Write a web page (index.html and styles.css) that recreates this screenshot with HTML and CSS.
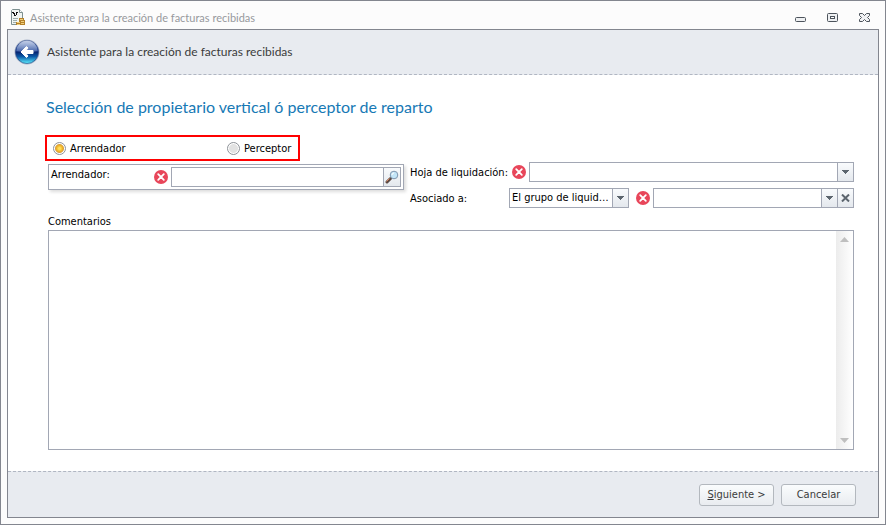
FILE: index.html
```html
<!DOCTYPE html>
<html lang="es">
<head>
  <meta charset="utf-8">
  <title>Asistente para la creación de facturas recibidas</title>
  <link rel="stylesheet" href="styles.css">
</head>
<body>
  <!-- shared icons -->
  <svg class="sprite" width="0" height="0">
    <symbol id="error" viewBox="0 0 14 14">
      <circle cx="7" cy="7" r="7" fill="#e8465a"/>
      <path d="M4.2 4.2l5.6 5.6M9.8 4.2L4.2 9.8" stroke="#fff" stroke-width="1.8" stroke-linecap="round"/>
    </symbol>
    <symbol id="arrow" viewBox="0 0 7 4">
      <path d="M0 0h7v1H6v1H5v1H4v1H3V3H2V2H1V1H0z" fill="#5c656e"/>
    </symbol>
  </svg>

  <div class="window">
    <div class="titlebar">
      <svg class="app-icon" width="16" height="17" viewBox="0 0 16 17">
        <path d="M1.500 1.500l1-1h7l3 3v12h-11z" fill="#f1f5f2" stroke="#7d9090"/>
        <path d="M9.500.5v3h3" fill="#fff" stroke="#7d9090"/>
        <path d="M2 3h2v1h1v2H4V5H3V4H2zM6 3h2v1H7v2H6zM4 6h2v1H4z" fill="#111"/>
        <path d="M3 9.500h5M3 11.500h4M3 13.500h3" stroke="#9fb0ae"/>
        <path d="M9 9h5v2h1v5H6v-3h3z" fill="#b5822c"/>
        <path d="M10 10.500h3M7 13.500h3M11 12.500h3M7 15.500h3M11 14.500h3" stroke="#f0cf7c"/>
      </svg>
      <span class="titlebar-text">Asistente para la creación de facturas recibidas</span>
      <div class="window-buttons">
        <button type="button" aria-label="Minimizar">
          <svg width="12" height="12" viewBox="0 0 12 12"><rect x=".5" y="5.500" width="10" height="4" rx="1" fill="#eef0f2" stroke="#4d545c"/></svg>
        </button>
        <button type="button" aria-label="Maximizar">
          <svg width="12" height="12" viewBox="0 0 12 12"><rect x=".5" y="1.500" width="10" height="8" rx="1" fill="#eef0f2" stroke="#4d545c"/><rect x="3.500" y="4.500" width="4" height="2" fill="#fff" stroke="#4d545c"/></svg>
        </button>
        <button type="button" aria-label="Cerrar">
          <svg width="12" height="12" viewBox="0 0 12 12"><path d="M.5 1.500h3l2 2 2-2h3v2l-2 2 2 2v2h-3l-2-2-2 2h-3v-2l2-2-2-2z" fill="#f0f1f3" stroke="#4d545c"/></svg>
        </button>
      </div>
    </div>

    <form class="wizard">
      <div class="wizard-header">
        <button class="back" type="button" aria-label="Atrás">
          <svg width="26" height="26" viewBox="0 0 26 26">
            <defs>
              <linearGradient id="ball" x1="0" y1="0" x2="0" y2="1">
                <stop offset="0" stop-color="#5b7cc0"/>
                <stop offset=".45" stop-color="#274b9c"/>
                <stop offset=".5" stop-color="#06236f"/>
                <stop offset=".7" stop-color="#0a5aa8"/>
                <stop offset="1" stop-color="#5ff0ff"/>
              </linearGradient>
              <linearGradient id="gloss" x1="0" y1="0" x2="0" y2="1">
                <stop offset="0" stop-color="#fff" stop-opacity=".65"/>
                <stop offset="1" stop-color="#fff" stop-opacity=".1"/>
              </linearGradient>
            </defs>
            <circle cx="13" cy="13" r="12.500" fill="#a9b4c9"/>
            <circle cx="13" cy="13" r="11.500" fill="url(#ball)" stroke="#27407f" stroke-width=".6"/>
            <path d="M2.500 12a10.500 10.500 0 0 1 21 0q-10 3-21 0z" fill="url(#gloss)"/>
            <path d="M7 13l5.500-5.500 1.500 1.500-2 2.500H19v3h-7l2 2.500-1.500 1.500z" fill="#fff" stroke="#fff" stroke-linejoin="round"/>
          </svg>
        </button>
        <span class="wizard-title">Asistente para la creación de facturas recibidas</span>
      </div>

      <div class="wizard-body">
        <h1>Selección de propietario vertical ó perceptor de reparto</h1>

        <div class="options">
          <label><input type="radio" name="tipo" checked><span>Arrendador</span></label>
          <label><input type="radio" name="tipo"><span>Perceptor</span></label>
        </div>

        <div class="fields">
          <div class="panel">
            <label class="panel-label" for="arrendador">Arrendador:</label>
            <svg class="error" width="14" height="14"><use href="#error"/></svg>
            <div class="box">
              <input type="text" id="arrendador">
              <button class="box-button search" type="button" aria-label="Buscar">
                <svg width="14" height="14" viewBox="0 0 14 14">
                  <path d="M6.500 7.500L5 9" stroke="#8d949b" stroke-width="1.500"/>
                  <path d="M5.500 8.500L2 12" stroke="#5c4a44" stroke-width="3" stroke-linecap="round"/>
                  <path d="M4.500 8.500L1.500 11.500" stroke="#e0875a" stroke-width="1"/>
                  <circle cx="9" cy="5" r="3.800" fill="#c4e6f8" stroke="#7e95ad"/>
                  <path d="M7 5a2 2 0 0 1 2-2" fill="none" stroke="#fff"/>
                </svg>
              </button>
            </div>
          </div>

          <div class="side">
            <div class="row">
              <label class="row-label wide" for="hoja">Hoja de liquidación:</label>
              <svg class="error" width="14" height="14"><use href="#error"/></svg>
              <div class="box">
                <select id="hoja"><option></option></select>
                <span class="box-button"><svg width="7" height="4"><use href="#arrow"/></svg></span>
              </div>
            </div>
            <div class="row">
              <label class="row-label" for="asociado">Asociado a:</label>
              <div class="box group">
                <select id="asociado"><option>El grupo de liquid…</option></select>
                <span class="box-button"><svg width="7" height="4"><use href="#arrow"/></svg></span>
              </div>
              <svg class="error" width="14" height="14"><use href="#error"/></svg>
              <div class="box">
                <select aria-label="Elemento asociado"><option></option></select>
                <span class="box-button"><svg width="7" height="4"><use href="#arrow"/></svg></span>
                <button class="box-button" type="button" aria-label="Borrar">
                  <svg width="9" height="8" viewBox="0 0 9 8"><path d="M1 .5l7 7M8 .5l-7 7" stroke="#5c656e" stroke-width="2"/></svg>
                </button>
              </div>
            </div>
          </div>
        </div>

        <label class="comments-label" for="comentarios">Comentarios</label>
        <div class="comments">
          <textarea id="comentarios"></textarea>
          <div class="scrollbar">
            <svg width="9" height="5" viewBox="0 0 9 5"><path d="M4.500 0L9 5H0z" fill="#bfbfbf"/></svg>
            <svg width="9" height="5" viewBox="0 0 9 5"><path d="M0 0h9L4.500 5z" fill="#bfbfbf"/></svg>
          </div>
        </div>
      </div>

      <div class="wizard-footer">
        <button class="btn" type="button"><u>S</u>iguiente &gt;</button>
        <button class="btn" type="button">Cancelar</button>
      </div>
    </form>
  </div>
</body>
</html>
```
FILE: styles.css
```css
*{
  box-sizing: border-box;
}
body{
  margin: 0;
  font-family: Tahoma, "DejaVu Sans Condensed", sans-serif;
  font-size: 11px;
  line-height: 16px;
  color: #000;
}
button,input,select,textarea{
  margin: 0;
  padding: 0;
  border: 0;
  background: none;
  font: inherit;
  color: inherit;
  outline: none;
}
svg{
  display: block;
  flex: none;
}
.sprite{
  position: absolute;
}

/* window frame */
.window{
  display: flex;
  flex-direction: column;
  min-height: 100vh;
  padding: 0 6px 6px;
  border: 1px solid #83868f;
  background: #fcfcfc;
}
.titlebar{
  display: flex;
  align-items: center;
  height: 28px;
  padding: 5px 8px 0 3px;
}
.titlebar-text{
  margin-left: 4px;
  font-family: "Segoe UI", Lato, sans-serif;
  color: #97999c;
}
.window-buttons{
  display: flex;
  gap: 20px;
  margin-left: auto;
}

/* wizard */
.wizard{
  display: flex;
  flex-direction: column;
  flex: 1;
  border: 1px solid #83868f;
  background: #fff;
}
.wizard-header{
  display: flex;
  align-items: center;
  height: 45px;
  padding-left: 6px;
  border-bottom: 1px dashed #b0b6c2;
  background: #e8ebf0;
}
.wizard-title{
  margin-left: 7px;
  font-family: "Segoe UI", Lato, sans-serif;
  font-size: 12px;
  color: #3b3b3b;
}
.wizard-body{
  display: flex;
  flex-direction: column;
  flex: 1;
  padding: 21px 24px 21px 40px;
}
h1{
  margin: 0 0 17px -2px;
  font-family: "Segoe UI", Lato, sans-serif;
  font-size: 16px;
  font-weight: normal;
  line-height: 22px;
  color: #1779b5;
}
.options{
  display: flex;
  width: 255px;
  height: 26px;
  margin-left: -3px;
  padding-left: 6px;
  border: 2px solid #f00;
}
.options label{
  display: flex;
  align-items: center;
  gap: 4px;
  width: 174px;
}
.options label:last-child{
  width: auto;
}
.options span{
  padding-top: 2px;
}
input[type=radio]{
  appearance: none;
  width: 13px;
  height: 13px;
  border: 1px solid #8d9197;
  border-radius: 50%;
  background: radial-gradient(circle, #e2e2e2 4px, #fff 5px);
}
input[type=radio]:checked{
  background: radial-gradient(circle, #ffdf5c 1px, #f0b428 3px, #d9a040 4px, #fff 5px);
}

/* fields */
.fields{
  display: flex;
  align-items: flex-start;
  gap: 6px;
}
.panel{
  display: flex;
  width: 356px;
  height: 26px;
  margin-top: 3px;
  padding: 2px;
  border: 1px solid #a2a7b4;
  box-shadow: 2px 2px 3px #ddd;
}
.panel-label{
  width: 103px;
}
.panel .error{
  margin-top: 3px;
}
.box{
  display: flex;
  flex: 1;
  height: 20px;
  min-width: 0;
  margin-left: 3px;
  border: 1px solid #a2a7b4;
  background: #fff;
}
.box input,.box select{
  flex: 1;
  min-width: 0;
  padding-left: 2px;
  appearance: none;
}
.box-button{
  display: flex;
  align-items: center;
  justify-content: center;
  width: 16px;
  border-left: 1px solid #a2a7b4;
  background: linear-gradient(#f9fbfd, #e4e8ed);
}
.box-button.search{
  width: 17px;
}
.side{
  display: flex;
  flex-direction: column;
  flex: 1;
  gap: 6px;
  min-width: 0;
  margin-top: 1px;
}
.row{
  display: flex;
  align-items: center;
}
.row-label{
  width: 96px;
  padding-top: 2px;
  white-space: nowrap;
}
.row-label.wide{
  width: 102px;
}
.box.group{
  flex: none;
  width: 120px;
  margin-right: 7px;
}
.comments-label{
  margin-top: 6px;
}
.comments{
  display: flex;
  flex: 1;
  border: 1px solid #a2a7b4;
}
.comments textarea{
  flex: 1;
  padding: 2px;
  resize: none;
}
.scrollbar{
  display: flex;
  flex-direction: column;
  align-items: center;
  justify-content: space-between;
  width: 17px;
  padding: 6px 0;
  background: linear-gradient(to right, #ececec, #fff);
}

/* footer */
.wizard-footer{
  display: flex;
  justify-content: flex-end;
  gap: 7px;
  height: 46px;
  padding: 12px 22px;
  border-top: 1px dashed #b0b6c2;
  background: #e8ebf0;
}
.btn{
  width: 75px;
  height: 22px;
  border: 1px solid #b3b8be;
  border-radius: 3px;
  background: linear-gradient(#fafcfd, #e9ecf0);
  color: #3b3b3b;
}
```
